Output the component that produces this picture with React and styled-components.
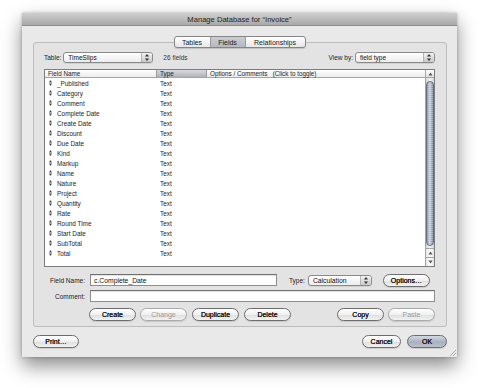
import React from "react";
import styled, { createGlobalStyle, css } from "styled-components";

const GlobalStyle = createGlobalStyle`
  html, body {
    margin: 0;
    padding: 0;
    background: #ffffff;
  }
  body {
    font-family: "Liberation Sans", Arial, sans-serif;
    font-size: 6.5px;
    color: #1a1a1a;
  }
`;

const Stage = styled.div`
  width: 480px;
  height: 388px;
  padding: 13px 0 0 22px;
  box-sizing: border-box;
`;

const Window = styled.div`
  width: 435px;
  height: 344px;
  display: flex;
  flex-direction: column;
  background: #e9e9e9;
  box-shadow: 0 9px 18px rgba(0, 0, 0, 0.45), 0 0 3px rgba(0, 0, 0, 0.25);
`;

const TitleBar = styled.div`
  height: 12px;
  flex: none;
  display: flex;
  align-items: center;
  justify-content: center;
  background: linear-gradient(#cfcfcf, #a8a8a8);
  border-bottom: 1px solid #8e8e8e;
  font-size: 7.6px;
  color: #1e1e1e;
`;

const Body = styled.div`
  flex: 1;
  display: flex;
  flex-direction: column;
  padding: 10px 10px 0 11px;
  position: relative;
`;

const TabStrip = styled.div`
  display: flex;
  justify-content: center;
  height: 12px;
  margin-bottom: -6px;
  position: relative;
  z-index: 1;
  padding-right: 1px;
`;

const Segmented = styled.div`
  display: flex;
  border: 1px solid #858585;
  border-radius: 3px;
  overflow: hidden;
  background: linear-gradient(#ffffff, #e6e6e6);
  box-shadow: 0 1px 1px rgba(0, 0, 0, 0.15);
`;

const Segment = styled.div`
  display: flex;
  align-items: center;
  justify-content: center;
  width: ${(p) => p.$w}px;
  font-size: 7px;
  color: #1a1a1a;
  border-left: ${(p) => (p.$first ? "none" : "1px solid #9a9a9a")};
  ${(p) =>
    p.$selected &&
    css`
      background: linear-gradient(#c9ccd2, #b4b9c1);
    `}
`;

const GroupBox = styled.div`
  height: 285px;
  box-sizing: border-box;
  border: 1px solid #bcbcbc;
  border-radius: 3px;
  background: #e3e3e3;
  padding: 9px 11px 0 10px;
  display: flex;
  flex-direction: column;
`;

const TopRow = styled.div`
  display: flex;
  align-items: center;
  height: 11px;
  margin-bottom: 6px;
`;

const Label = styled.span`
  color: #222;
  white-space: nowrap;
  ${(p) =>
    p.$width &&
    css`
      width: ${p.$width}px;
      text-align: right;
      flex: none;
    `}
`;

const Popup = styled.div`
  width: ${(p) => p.$w}px;
  height: 11px;
  box-sizing: border-box;
  margin-left: ${(p) => p.$ml || 2}px;
  border: 1px solid #8a8a8a;
  border-radius: 3px;
  background: linear-gradient(#ffffff, #ececec);
  display: flex;
  align-items: center;
  overflow: hidden;
  flex: none;
  box-shadow: 0 1px 0 rgba(0, 0, 0, 0.08);
`;

const PopupText = styled.span`
  flex: 1;
  padding-left: 4px;
  font-size: ${(p) => p.$fs || 6.5}px;
  color: #111;
`;

const PopupEnd = styled.span`
  width: 10px;
  align-self: stretch;
  display: flex;
  align-items: center;
  justify-content: center;
  border-left: 1px solid #b4b4b4;
  background: linear-gradient(#f2f2f2, #c9c9c9);
`;

const Count = styled.span`
  margin-left: 10px;
  color: #333;
`;

const Spacer = styled.div`
  flex: 1;
`;

const ListBox = styled.div`
  width: 391px;
  height: 198px;
  box-sizing: border-box;
  border: 1px solid #7c7c7c;
  background: #ffffff;
  display: flex;
  box-shadow: inset 0 1px 1px rgba(0, 0, 0, 0.2);
`;

const ListMain = styled.div`
  flex: 1;
  display: flex;
  flex-direction: column;
`;

const HeaderRow = styled.div`
  display: grid;
  grid-template-columns: 112px 50px 1fr;
  height: 7px;
  border-bottom: 1px solid #a5a5a5;
  background: linear-gradient(#ffffff, #ececec);
`;

const HeaderCell = styled.div`
  display: flex;
  align-items: center;
  padding-left: ${(p) => p.$pl || 3}px;
  font-size: 6.3px;
  color: #222;
  border-right: 1px solid #9a9a9a;
  ${(p) =>
    p.$active &&
    css`
      background: linear-gradient(#d9dbe0, #aeb2b9);
    `}
  &:last-child {
    border-right: none;
  }
`;

const Row = styled.div`
  display: grid;
  grid-template-columns: 112px 50px 1fr;
  height: 10px;
  align-items: center;
  font-size: 6.4px;
  color: #1c1c1c;
`;

const NameCell = styled.div`
  display: flex;
  align-items: center;
  padding-left: 4px;
  gap: 5px;
`;

const TypeCell = styled.div`
  padding-left: 3px;
`;

const ScrollBar = styled.div`
  width: 8px;
  flex: none;
  border-left: 1px solid #a5a5a5;
  display: flex;
  flex-direction: column;
  background: linear-gradient(90deg, #d6d6d6, #f4f4f4 50%, #d6d6d6);
`;

const ScrollCap = styled.div`
  height: 7px;
  flex: none;
  display: flex;
  align-items: center;
  justify-content: center;
  border-bottom: 1px solid #a5a5a5;
  background: linear-gradient(#ffffff, #e2e2e2);
`;

const Thumb = styled.div`
  flex: 1;
  margin: 3px 0 2px;
  border: 1px solid #5f6e82;
  border-radius: 4px;
  background: repeating-linear-gradient(
      0deg,
      rgba(255, 255, 255, 0.25) 0 1px,
      rgba(255, 255, 255, 0) 1px 2px
    ),
    linear-gradient(90deg, #7d8ca0, #c9d3e0 45%, #a6b3c4 70%, #7f8ea2);
`;

const ArrowBtn = styled.div`
  height: 8px;
  flex: none;
  display: flex;
  align-items: center;
  justify-content: center;
  border-top: 1px solid #a5a5a5;
  background: linear-gradient(90deg, #e5e5e5, #ffffff 50%, #e5e5e5);
`;

const FormRow = styled.div`
  display: flex;
  align-items: center;
  height: 12px;
  margin-top: ${(p) => p.$mt}px;
`;

const TextInput = styled.div`
  width: ${(p) => (p.$w ? `${p.$w}px` : "auto")};
  flex: ${(p) => (p.$w ? "none" : "1")};
  height: 12px;
  box-sizing: border-box;
  margin-left: 5px;
  border: 1px solid #8d8d8d;
  border-top-color: #6f6f6f;
  background: #ffffff;
  box-shadow: inset 0 1px 1px rgba(0, 0, 0, 0.12);
  display: flex;
  align-items: center;
  padding-left: 3px;
  font-size: 6.8px;
  color: #111;
`;

const Button = styled.div`
  width: ${(p) => p.$w}px;
  height: 13px;
  box-sizing: border-box;
  margin-left: ${(p) => p.$ml || 0}px;
  flex: none;
  display: flex;
  align-items: center;
  justify-content: center;
  border-radius: 7px;
  border: 1px solid ${(p) => (p.$disabled ? "#a9a9a9" : "#6d6d6d")};
  background: ${(p) =>
    p.$default
      ? "linear-gradient(#d4dae3, #a8b1bf 55%, #b9c1cc)"
      : "linear-gradient(#ffffff, #f0f0f0 50%, #dedede 51%, #f2f2f2)"};
  color: ${(p) => (p.$disabled ? "#9a9a9a" : "#111")};
  font-size: 7px;
  font-weight: 400;
  text-shadow: ${(p) => (p.$disabled ? "none" : "0 0 0.3px #111")};
  box-shadow: 0 1px 1px rgba(0, 0, 0, 0.12);
`;

const ButtonRow = styled.div`
  display: flex;
  align-items: center;
  height: 13px;
  margin-top: 6px;
  padding-left: 45px;
`;

const Footer = styled.div`
  display: flex;
  align-items: center;
  height: 13px;
  margin-top: 8px;
`;

const Grip = styled.svg`
  position: absolute;
  right: 1px;
  bottom: 1px;
`;

const fields = [
  "_Published",
  "Category",
  "Comment",
  "Complete Date",
  "Create Date",
  "Discount",
  "Due Date",
  "Kind",
  "Markup",
  "Name",
  "Nature",
  "Project",
  "Quantity",
  "Rate",
  "Round Time",
  "Start Date",
  "SubTotal",
  "Total",
];

const UpDown = ({ color = "#333" }) => (
  <svg width="4" height="7" viewBox="0 0 4 7">
    <path d="M2 0 L4 2.6 L0 2.6 Z" fill={color} />
    <path d="M2 7 L4 4.4 L0 4.4 Z" fill={color} />
  </svg>
);

const Handle = () => (
  <svg width="3" height="6" viewBox="0 0 3 6">
    <path d="M1.5 0 L3 2.4 L0 2.4 Z" fill="#444" />
    <path d="M1.5 6 L3 3.6 L0 3.6 Z" fill="#444" />
  </svg>
);

const Tri = ({ up }) => (
  <svg width="5" height="4" viewBox="0 0 5 4">
    <path d={up ? "M2.5 0.5 L4.5 3.5 L0.5 3.5 Z" : "M2.5 3.5 L4.5 0.5 L0.5 0.5 Z"} fill="#555" />
  </svg>
);

export default function App() {
  return (
    <>
      <GlobalStyle />
      <Stage>
        <Window>
          <TitleBar>Manage Database for “Invoice”</TitleBar>
          <Body>
            <TabStrip>
              <Segmented>
                <Segment $w={35} $first>
                  Tables
                </Segment>
                <Segment $w={34} $selected>
                  Fields
                </Segment>
                <Segment $w={59}>Relationships</Segment>
              </Segmented>
            </TabStrip>
            <GroupBox>
              <TopRow>
                <Label>Table:</Label>
                <Popup $w={90}>
                  <PopupText>TimeSlips</PopupText>
                  <PopupEnd>
                    <UpDown />
                  </PopupEnd>
                </Popup>
                <Count>26 fields</Count>
                <Spacer />
                <Label>View by:</Label>
                <Popup $w={80}>
                  <PopupText>field type</PopupText>
                  <PopupEnd>
                    <UpDown />
                  </PopupEnd>
                </Popup>
              </TopRow>
              <ListBox>
                <ListMain>
                  <HeaderRow>
                    <HeaderCell>Field Name</HeaderCell>
                    <HeaderCell $active>Type</HeaderCell>
                    <HeaderCell>Options / Comments&nbsp;&nbsp;&nbsp;(Click to toggle)</HeaderCell>
                  </HeaderRow>
                  {fields.map((f) => (
                    <Row key={f}>
                      <NameCell>
                        <Handle />
                        <span>{f}</span>
                      </NameCell>
                      <TypeCell>Text</TypeCell>
                      <div />
                    </Row>
                  ))}
                </ListMain>
                <ScrollBar>
                  <ScrollCap>
                    <Tri up />
                  </ScrollCap>
                  <Thumb />
                  <ArrowBtn>
                    <Tri up />
                  </ArrowBtn>
                  <ArrowBtn>
                    <Tri />
                  </ArrowBtn>
                </ScrollBar>
              </ListBox>
              <FormRow $mt={7}>
                <Label $width={41}>Field Name:</Label>
                <TextInput $w={187}>c.Complete_Date</TextInput>
                <Label style={{ marginLeft: 12 }}>Type:</Label>
                <Popup $w={64} $ml={3}>
                  <PopupText $fs={6.8}>Calculation</PopupText>
                  <PopupEnd>
                    <UpDown />
                  </PopupEnd>
                </Popup>
                <Button $w={47} $ml={11}>
                  Options…
                </Button>
              </FormRow>
              <FormRow $mt={4}>
                <Label $width={41}>Comment:</Label>
                <TextInput />
              </FormRow>
              <ButtonRow>
                <Button $w={47}>Create</Button>
                <Button $w={47} $ml={4} $disabled>
                  Change
                </Button>
                <Button $w={47} $ml={5}>
                  Duplicate
                </Button>
                <Button $w={47} $ml={5}>
                  Delete
                </Button>
                <Spacer />
                <Button $w={47}>Copy</Button>
                <Button $w={47} $ml={4} $disabled>
                  Paste
                </Button>
              </ButtonRow>
            </GroupBox>
            <Footer>
              <Button $w={46}>Print…</Button>
              <Spacer />
              <Button $w={39}>Cancel</Button>
              <Button $w={40} $ml={6} $default>
                OK
              </Button>
            </Footer>
            <Grip width="7" height="7" viewBox="0 0 7 7">
              <path d="M1 7 L7 1 M4 7 L7 4" stroke="#9a9a9a" strokeWidth="0.8" />
            </Grip>
          </Body>
        </Window>
      </Stage>
    </>
  );
}
